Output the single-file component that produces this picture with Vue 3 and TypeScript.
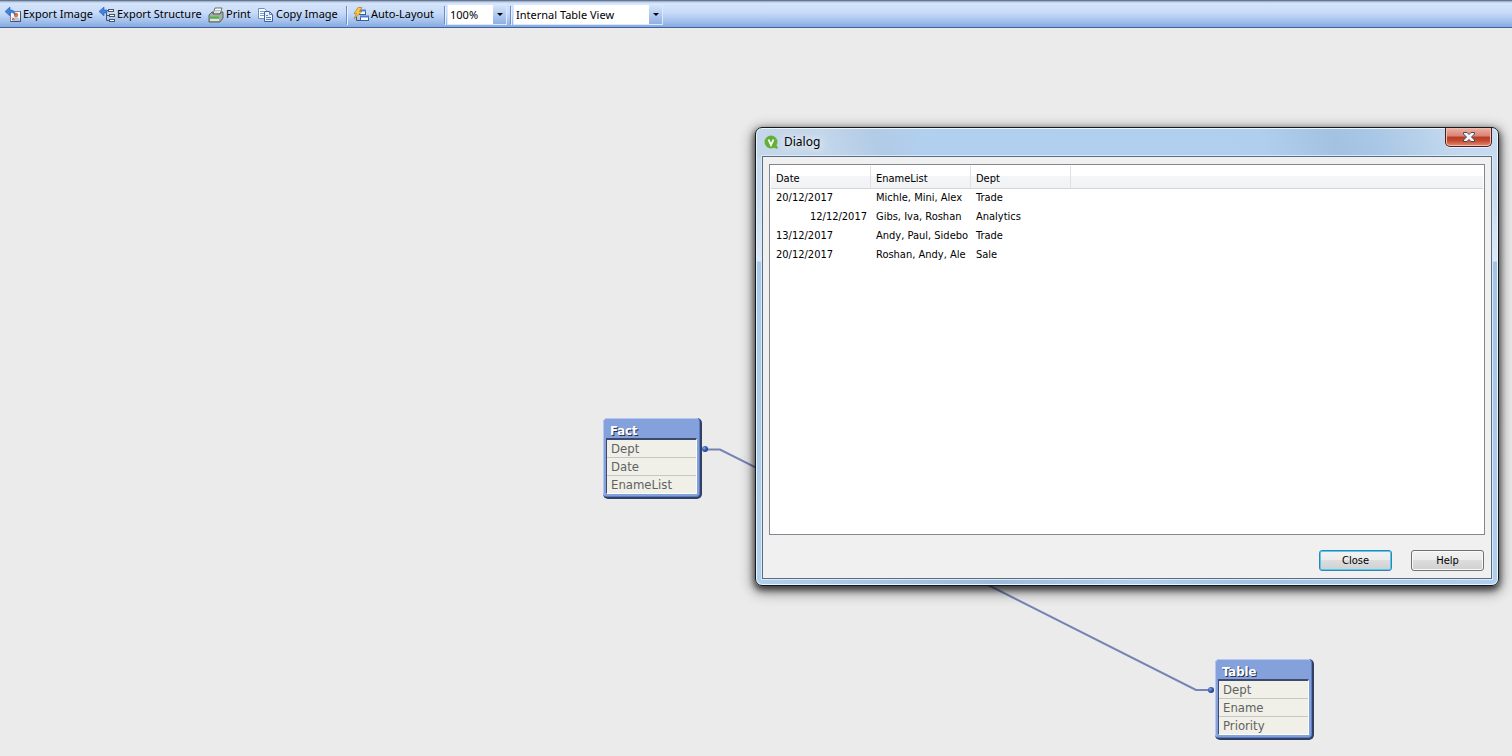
<script setup lang="ts">
import { ref } from 'vue'

interface Row {
  date: string
  numeric: boolean
  names: string
  dept: string
}

interface TableNode {
  id: string
  title: string
  fields: string[]
}

const zoom = ref('100%')
const view = ref('Internal Table View')

const rows: Row[] = [
  { date: '20/12/2017', numeric: false, names: 'Michle, Mini, Alex', dept: 'Trade' },
  { date: '12/12/2017', numeric: true, names: 'Gibs, Iva, Roshan', dept: 'Analytics' },
  { date: '13/12/2017', numeric: false, names: 'Andy, Paul, Sidebo', dept: 'Trade' },
  { date: '20/12/2017', numeric: false, names: 'Roshan, Andy, Ale', dept: 'Sale' },
]

const nodes: TableNode[] = [
  { id: 'fact', title: 'Fact', fields: ['Dept', 'Date', 'EnameList'] },
  { id: 'table', title: 'Table', fields: ['Dept', 'Ename', 'Priority'] },
]
</script>

<template>
  <div class="viewer">
    <header class="toolbar" role="toolbar" aria-label="Table viewer">
      <button type="button" class="tool w-image">
        <svg width="17" height="16" viewBox="0 0 17 16">
          <rect x="5.500" y="4.500" width="10" height="10" fill="#fbfaf8" stroke="#7486a8" />
          <path d="M15.500 4.500v10h-10" fill="none" stroke="#3f5277" />
          <circle cx="11" cy="8" r="2.200" fill="#d9763c" />
          <path d="M7 14c0-3 2-4 4-4s4 1 4 4z" fill="#b9c9e2" />
          <path d="M7 10.500l2.500 2.500M7 13l2-2" stroke="#c65a40" />
          <path d="M0 4.500L5 0v3c4 0 5 2 5 5-1-2-2-2.500-5-2.500V9z" fill="#3f82dc" stroke="#2a60b8" stroke-width=".6" />
        </svg>
        Export Image
      </button>
      <button type="button" class="tool w-structure">
        <svg width="17" height="16" viewBox="0 0 17 16">
          <path d="M7.500 5.500v8H12M7.500 8.500H11M7.500 3.500H10" fill="none" stroke="#46546a" />
          <rect x="9.500" y="2.500" width="5" height="2" fill="#fff" stroke="#46546a" />
          <rect x="10.500" y="7.500" width="5" height="2" fill="#fff" stroke="#46546a" />
          <rect x="10.500" y="12.500" width="5" height="2" fill="#fff" stroke="#46546a" />
          <path d="M0 4.500L5 0v3h3v3H5v3z" fill="#3f82dc" stroke="#2a60b8" stroke-width=".6" />
        </svg>
        Export Structure
      </button>
      <button type="button" class="tool w-print">
        <svg width="17" height="16" viewBox="0 0 17 16">
          <path d="M5 7l2-6h7l-2 6z" fill="#fff" stroke="#5a625e" stroke-width=".9" />
          <path d="M7 3.500h5M6.500 5h5" stroke="#98a2aa" stroke-width=".7" />
          <path d="M1 8l3-3h1v2h7l1-2h2v6l-3 4H1z" fill="#a4afa6" stroke="#4d5952" stroke-width=".9" />
          <path d="M2 9.500h9v2H2z" fill="#51b845" />
          <path d="M2 13h9" stroke="#f3f6f2" stroke-width="1.500" />
        </svg>
        Print
      </button>
      <button type="button" class="tool w-copy">
        <svg width="17" height="16" viewBox="0 0 17 16">
          <path d="M.500 1.500h6l2 2v8h-8z" fill="#fff" stroke="#6b8fc4" />
          <path d="M2 4.500h4M2 6.500h4M2 8.500h4" stroke="#7c9fd0" />
          <path d="M6.500 4.500h5l3 3v7h-8z" fill="#eaf2fd" stroke="#3e62a4" />
          <path d="M11.500 4.500v3h3M8 8.500h2M8 10.500h5M8 12.500h5" fill="none" stroke="#5880bf" />
        </svg>
        Copy Image
      </button>
      <i class="sep"></i>
      <button type="button" class="tool w-auto">
        <svg width="17" height="16" viewBox="0 0 17 16">
          <rect x="6.500" y="3.500" width="6" height="4" fill="#fff" stroke="#355f9f" />
          <path d="M6 3.500h7" stroke="#4b80cc" stroke-width="2" />
          <path d="M3.500 9v4.500H8" fill="none" stroke="#46546a" />
          <rect x="7.500" y="9.500" width="8" height="4" fill="#fff" stroke="#355f9f" />
          <path d="M7 9.500h9" stroke="#4b80cc" stroke-width="2" />
          <path d="M5 .500h4L6.500 4.500H9L1 12l2.500-5.500H1z" fill="#fcc53f" stroke="#aa7b2b" stroke-width=".7" />
        </svg>
        Auto-Layout
      </button>
      <i class="sep"></i>
      <span class="combo zoom">
        <select v-model="zoom" aria-label="Zoom">
          <option>100%</option>
        </select>
        <i class="drop"></i>
      </span>
      <i class="sep"></i>
      <span class="combo view">
        <select v-model="view" aria-label="View">
          <option>Internal Table View</option>
        </select>
        <i class="drop"></i>
      </span>
    </header>

    <main class="canvas">
      <svg class="links" width="1512" height="728" viewBox="0 28 1512 728">
        <defs>
          <radialGradient id="port" cx=".35" cy=".35" r=".7">
            <stop offset="0" stop-color="#86aaf0" />
            <stop offset=".5" stop-color="#3a62b4" />
            <stop offset="1" stop-color="#1e3a7c" />
          </radialGradient>
        </defs>
        <path d="M705 449.500H720L1196 690H1211" fill="none" stroke="#7684b4" stroke-width="2" />
        <circle cx="705" cy="449" r="3" fill="url(#port)" />
        <circle cx="1211" cy="690" r="3" fill="url(#port)" />
      </svg>

      <section v-for="n in nodes" :key="n.id" class="node" :class="n.id">
        <h2>{{ n.title }}</h2>
        <ul>
          <li v-for="f in n.fields" :key="f">{{ f }}</li>
        </ul>
      </section>

      <section class="dialog" role="dialog" aria-labelledby="dialog-title">
        <div class="titlebar">
          <svg width="15" height="15" viewBox="0 0 15 15">
            <circle cx="7" cy="7" r="6.500" fill="#62b136" />
            <path d="M11 9l3 3-1 2-4-2z" fill="#62b136" />
            <path d="M4.500 4.500L7 10l2.500-5.500" fill="none" stroke="#fff" stroke-width="1.800" />
          </svg>
          <h1 id="dialog-title">Dialog</h1>
          <button type="button" class="close" aria-label="Close window">
            <svg width="12" height="10" viewBox="0 0 12 10">
              <path d="M.500 .500h3.500l2 2 2-2h3.500v1.500L8.500 5l3 3v1.500H8l-2-2-2 2H.500V8l3-3-3-3z" fill="#f4f4f6" stroke="#47485c" />
            </svg>
          </button>
        </div>
        <div class="client">
          <div class="list">
            <table>
              <colgroup>
                <col class="c" /><col class="c" /><col class="c" /><col />
              </colgroup>
              <thead>
                <tr>
                  <th>Date</th>
                  <th>EnameList</th>
                  <th>Dept</th>
                  <td></td>
                </tr>
              </thead>
              <tbody>
                <tr v-for="(r, i) in rows" :key="i">
                  <td :class="{ num: r.numeric }">{{ r.date }}</td>
                  <td>{{ r.names }}</td>
                  <td>{{ r.dept }}</td>
                  <td></td>
                </tr>
              </tbody>
            </table>
          </div>
          <div class="actions">
            <button type="button" class="push default">Close</button>
            <button type="button" class="push">Help</button>
          </div>
        </div>
      </section>
    </main>
  </div>
</template>

<style>
body {
  background: #ebebeb;
}
</style>

<style scoped>
.viewer {
  box-sizing: border-box;
  display: flex;
  flex-direction: column;
  min-height: 100vh;
  overflow: hidden;
  background: #ebebeb;
  color: #000;
  font-family: "Noto Sans", "Open Sans", sans-serif;
  font-size: 12px;
}
button,
select {
  margin: 0;
  padding: 0;
  font: inherit;
  color: inherit;
}
.toolbar {
  box-sizing: border-box;
  display: flex;
  align-items: center;
  height: 28px;
  padding: 1px 0 0 5px;
  border-top: 1px solid #66768b;
  border-bottom: 1px solid #3f639f;
  background: linear-gradient(#8fa3c4 0, #d5e4fa 2px, #c8dbf8 45%, #a6c3ee 75%, #86a9e0 100%);
}
.tool {
  display: flex;
  align-items: center;
  gap: 1px;
  padding-bottom: 2px;
  border: 0;
  background: none;
  font-size: 11px;
  white-space: nowrap;
}
.tool svg {
  flex: none;
  margin-top: 2px;
}
.w-image { width: 94px; }
.w-structure { width: 109px; }
.w-print { width: 50px; }
.w-copy { width: 88px; }
.w-auto { width: 91px; }
.sep {
  width: 1px;
  height: 18px;
  margin-right: 6px;
  background: #6a8ccb;
  box-shadow: 1px 1px 0 #e9f1fe;
}
.w-auto + .sep { margin-right: 2px; }
.zoom + .sep { margin: 0 2px 0 3px; }
.combo {
  box-sizing: border-box;
  display: flex;
  height: 21px;
  border: 1px solid #dbe8fc;
  background: #fff;
}
.zoom { width: 60px; }
.view { width: 150px; }
.combo select {
  flex: 1;
  min-width: 0;
  padding-left: 2px;
  border: 0;
  outline: 0;
  background: none;
  font-size: 11px;
  appearance: none;
}
.drop {
  display: flex;
  align-items: center;
  justify-content: center;
  width: 13px;
  background: linear-gradient(#d6e5fb, #8fb0e4);
}
.drop::after {
  content: "";
  border: 3px solid transparent;
  border-top-color: #000;
  border-bottom: 0;
}
.canvas {
  position: relative;
  flex: 1;
}
.links {
  position: absolute;
  top: 0;
  left: 0;
}
.node {
  position: absolute;
  box-sizing: border-box;
  width: 97px;
  padding: 0 2px 2px;
  border: 1px solid #b3c9f4;
  border-right-color: #5c7cc0;
  border-bottom-color: #5c7cc0;
  border-radius: 4px;
  background: #84a1dc;
  box-shadow: 1px 1px 0 1px #324066;
  clip-path: inset(0 -2px -2px 0 round 4px);
  font-family: "DejaVu Sans Condensed", "DejaVu Sans", sans-serif;
}
.fact { top: 390px; left: 603px; }
.table { top: 631px; left: 1215px; }
.node h2 {
  margin: 0;
  padding: 5px 0 0 4px;
  color: #fff;
  font-size: 13px;
  font-weight: bold;
  line-height: 14px;
  text-shadow: 1px 1px 0 #26304e;
}
.node ul {
  margin: 0;
  padding: 0;
  border: 1px solid #fbfdf8;
  border-top: 2px solid #3c4a72;
  border-left: 1px solid #3c4a72;
  background: #f0f0e8;
  list-style: none;
}
.node li {
  padding-left: 4px;
  border-bottom: 1px solid #c6c6c8;
  color: #616161;
  font-size: 13px;
  line-height: 17px;
}
.node li:last-child {
  border-bottom: 0;
}
.dialog {
  position: absolute;
  top: 99px;
  left: 755px;
  box-sizing: border-box;
  display: flex;
  flex-direction: column;
  width: 744px;
  height: 459px;
  padding: 0 5px 5px;
  border: 1px solid #15191f;
  border-radius: 7px;
  background:
    linear-gradient(#c9dcf0 0, #c5daf1 30px, #dbe9f8 103px, #a9c9ea 104px, #b1d0ee 100%) 0 100% / 7px calc(100% - 30px) no-repeat,
    linear-gradient(#c9dcf0 0, #c5daf1 30px, #dbe9f8 103px, #a4c4e6 104px, #b1d0ee 100%) 100% 100% / 7px calc(100% - 30px) no-repeat,
    linear-gradient(70deg, #c5d7ea 0, #c3d6ea 70px, #b2cbe6 120px, #b1cfee 160px, #b0ceed 480px, #a3c2e2 550px, #a9c7e6 590px, #c2d8ee 660px, #c8dcf1 100%) 0 0 / 100% 30px no-repeat,
    linear-gradient(90deg, #b0d0ee 0, #9dbbda 240px, #b0cfee 380px, #a2c3e3 500px, #b1d0ef 100%);
  box-shadow: inset 0 0 0 1px #eaf5fd, 0 3px 6px 1px rgba(0, 0, 0, .6), 0 4px 14px 2px rgba(0, 0, 0, .45);
}
.titlebar {
  display: flex;
  align-items: center;
  height: 28px;
  padding-left: 3px;
}
.titlebar h1 {
  margin: 0 auto 0 5px;
  padding-bottom: 1px;
  font-size: 12px;
  font-weight: normal;
  text-shadow: 0 0 8px #fff, 0 0 12px #fff;
}
.close {
  box-sizing: border-box;
  display: flex;
  align-items: center;
  justify-content: center;
  align-self: flex-start;
  width: 47px;
  height: 19px;
  margin-right: 1px;
  border: 1px solid #4e1c1c;
  border-top: 0;
  border-radius: 0 0 5px 5px;
  background: linear-gradient(#eeb3a6 0, #d88373 45%, #b93a25 50%, #c4492f 70%, #e28c70 100%);
  box-shadow: inset 0 0 0 1px #f0bdb1, 0 1px 0 #e6f0fa;
}
.client {
  box-sizing: border-box;
  display: flex;
  flex: 1;
  flex-direction: column;
  gap: 15px;
  padding: 7px 6px;
  border: 1px solid #5c6c7f;
  margin: 0 1px 1px;
  background: #f0f0f0;
  box-shadow: 0 0 0 1px #d9ebfa;
  font-family: "DejaVu Sans Condensed", "DejaVu Sans", sans-serif;
  font-size: 11px;
}
.list {
  flex: 1;
  border: 1px solid #828790;
  padding: 1px;
  background: #fff;
}
table {
  width: 100%;
  border-collapse: separate;
  border-spacing: 0;
  table-layout: fixed;
}
.c { width: 100px; }
th,
td {
  box-sizing: border-box;
  padding: 0 4px 0 5px;
  overflow: hidden;
  font-weight: normal;
  text-align: left;
  white-space: nowrap;
}
thead tr > * {
  height: 23px;
  padding-top: 2px;
  border-bottom: 1px solid #d5d5d5;
  background: linear-gradient(#fff 0, #fff 10px, #f5f6f8 10px, #f1f2f4 100%);
}
th {
  border-right: 1px solid #dfe1e4;
}
tbody td {
  height: 19px;
  padding-bottom: 2px;
}
.num {
  text-align: right;
}
.actions {
  display: flex;
  justify-content: flex-end;
  gap: 19px;
  padding-right: 1px;
}
.push {
  box-sizing: border-box;
  width: 73px;
  height: 21px;
  border: 1px solid #707070;
  border-radius: 3px;
  background: linear-gradient(#f2f2f2 0, #ebebeb 50%, #dddddd 50%, #cfcfcf 100%);
  box-shadow: inset 0 0 0 1px #fafafa;
}
.default {
  border-color: #3c7fb1;
  box-shadow: inset 0 0 0 1px #45d0f5;
}
</style>
